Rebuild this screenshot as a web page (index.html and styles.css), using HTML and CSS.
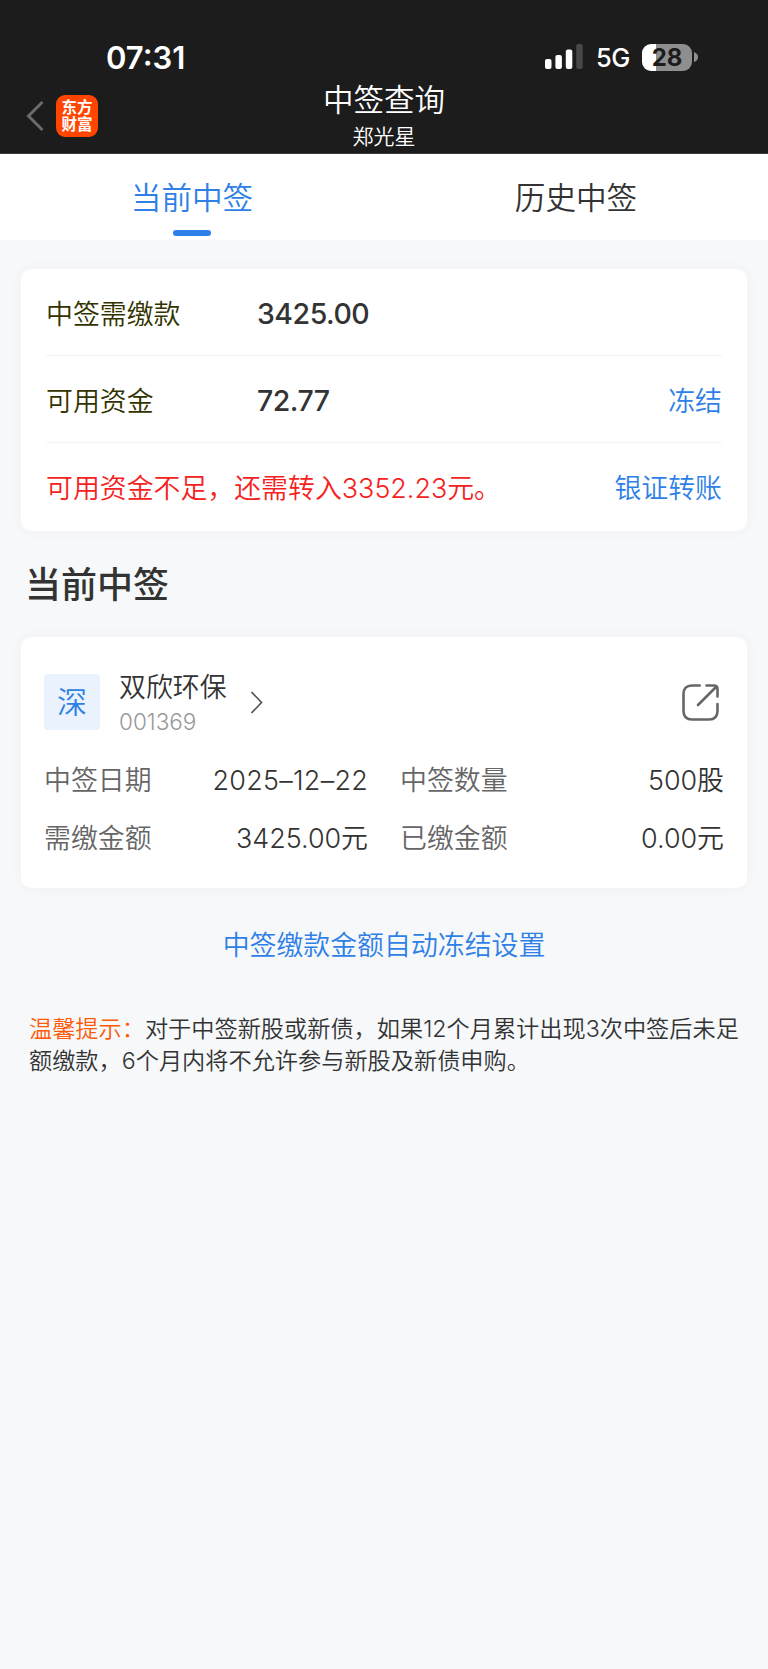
FILE: index.html
```html
<!DOCTYPE html>
<html lang="zh-CN">
<head>
<meta charset="utf-8">
<title>中签查询</title>
<link rel="stylesheet" href="styles.css">
</head>
<body>
<header class="top">
  <div class="status">
    <span class="clock">07:31</span>
    <span class="indicators">
      <svg class="signal" width="38" height="26" viewBox="0 0 38 26">
        <rect x="0" y="15" width="6.500" height="10" rx="2" fill="#fff"/>
        <rect x="10.400" y="11" width="6.500" height="14" rx="2" fill="#fff"/>
        <rect x="20.800" y="5.500" width="6.500" height="19.500" rx="2" fill="#fff"/>
        <rect x="31.200" y="0" width="6.500" height="25" rx="2" fill="#484848"/>
      </svg>
      <span class="network">5G</span>
      <span class="battery"><span class="battery-level">28</span><svg width="5" height="10" viewBox="0 0 5 10"><path d="M1 0Q5 1.500 5 5T1 10Z" fill="#8e8e8e"/></svg></span>
    </span>
  </div>
  <div class="nav">
    <div class="nav-left">
      <svg width="18" height="32" viewBox="0 0 18 32"><path d="M16.500 2L2.500 16L16.500 30" fill="none" stroke="#6b6b6b" stroke-width="3"/></svg>
      <div class="logo"><span>东方</span><span>财富</span></div>
    </div>
    <div class="nav-title">
      <h1>中签查询</h1>
      <p>郑光星</p>
    </div>
  </div>
</header>
<nav class="tabs">
  <a class="tab tab-active">当前中签</a>
  <a class="tab">历史中签</a>
</nav>
<main>
  <section class="card funds">
    <div class="fund-row"><span class="fund-label">中签需缴款</span><b class="amount">3425.00</b></div>
    <div class="fund-row"><span class="fund-label">可用资金</span><b class="amount">72.77</b><a class="link">冻结</a></div>
    <div class="fund-row"><span class="warning">可用资金不足，还需转入3352.23元。</span><a class="link">银证转账</a></div>
  </section>
  <h2>当前中签</h2>
  <section class="card stock">
    <div class="stock-head">
      <span class="market">深</span>
      <div class="stock-name"><strong>双欣环保</strong><span>001369</span></div>
      <svg class="chevron" width="13" height="23" viewBox="0 0 13 23"><path d="M1.500 1L11.500 11.500L1.500 22" fill="none" stroke="#555" stroke-width="1.700"/></svg>
      <svg class="share" width="37" height="37" viewBox="0 0 37 37"><path d="M17.700 1.500H10Q1.500 1.500 1.500 10V27Q1.500 35.500 10 35.500H27Q35.500 35.500 35.500 27V20M24.500 1.500H32Q35.500 1.500 35.500 5V12.500M34 3L16 21" fill="none" stroke="#666" stroke-width="2.600" stroke-linecap="round"/></svg>
    </div>
    <dl class="details">
      <div><dt>中签日期</dt><dd class="date">2025–12–22</dd></div>
      <div><dt>中签数量</dt><dd>500股</dd></div>
      <div><dt>需缴金额</dt><dd>3425.00元</dd></div>
      <div><dt>已缴金额</dt><dd>0.00元</dd></div>
    </dl>
  </section>
  <a class="setting">中签缴款金额自动冻结设置</a>
  <p class="tip"><em>温馨提示：</em>对于中签新股或新债，如果12个月累计出现3次中签后未足<br>额缴款，6个月内将不允许参与新股及新债申购。</p>
</main>
</body>
</html>
```
FILE: styles.css
```css
* { box-sizing: border-box; margin: 0; padding: 0; }
body {
  min-height: 1669px;
  background: #f6f8fa;
  color: #333;
  font-family: Inter, "Noto Sans CJK SC", sans-serif;
  font-size: 26.9px;
  font-weight: 350;
}
.top {
  height: 154px;
  background: #1c1c1c;
  border-bottom: 1px solid #3a3a3a;
  color: #fff;
}
.status {
  display: flex;
  justify-content: space-between;
  height: 82px;
  padding: 38px 70px 0 106px;
}
.clock { font-size: 31px; font-weight: 600; line-height: 39px; }
.indicators { display: flex; align-items: center; height: 38px; }
.network { width: 34px; margin: 0 12px 0 13px; font-size: 25.500px; font-weight: 450; letter-spacing: -0.500px; }
.battery { display: flex; align-items: center; gap: 1px; }
.battery-level {
  width: 50px;
  height: 27px;
  border-radius: 9px;
  background: linear-gradient(90deg, #fff 14.500px, #8e8e8e 14.500px);
  color: #1c1c1c;
  font-size: 24px;
  font-weight: 700;
  line-height: 27px;
  text-align: center;
}
.nav { display: grid; grid-template-columns: 1fr auto 1fr; }
.nav-left { display: flex; align-items: center; gap: 12px; height: 67px; padding-left: 26px; }
.logo {
  display: flex;
  flex-direction: column;
  justify-content: center;
  width: 42px;
  height: 42px;
  border-radius: 9px;
  background: #ff4500;
  font-size: 15.500px;
  font-weight: 700;
  line-height: 17px;
  text-align: center;
}
.nav-title { text-align: center; }
.nav-title h1 { font-size: 30.500px; font-weight: 350; line-height: 36px; }
.nav-title p { font-size: 21px; line-height: 38px; }
.tabs { display: flex; height: 86px; background: #fff; }
.tab {
  display: flex;
  flex: 1;
  flex-direction: column;
  align-items: center;
  padding-top: 22px;
  font-size: 30.600px;
  line-height: 44px;
}
.tab-active { color: #2e7fe6; }
.tab-active::after { content: ""; width: 38px; height: 6px; margin-top: 10px; border-radius: 3px; background: #2e7fe6; }
main { padding: 29px 21px 0; }
.card { border-radius: 10px; background: #fff; box-shadow: 0 0 14px rgba(30, 50, 80, 0.04); }
.funds { height: 262px; padding: 0 25px; }
.fund-row { display: flex; align-items: center; height: 87px; border-bottom: 1px solid #f3f4f6; }
.fund-row:last-child { border: 0; }
.fund-label { width: 211px; color: #333300; }
.amount { padding-top: 2px; font-size: 28.500px; font-weight: 500; letter-spacing: -0.500px; }
.link { margin-left: auto; color: #2e7fe6; }
.warning { color: #f52222; }
h2 { padding: 32px 0 30px 4px; font-size: 36px; font-weight: 500; line-height: 44px; }
.stock { height: 251px; padding: 37px 23px 0 23px; }
.stock-head { display: flex; height: 56px; }
.market {
  width: 56px;
  height: 56px;
  border-radius: 4px;
  background: #e9f2fd;
  color: #2e7fe6;
  font-size: 30px;
  line-height: 56px;
  text-align: center;
}
.stock-name { display: flex; flex-direction: column; margin: -5px 0 0 19px; }
.stock-name strong { font-weight: 350; line-height: 36px; }
.stock-name span { color: #999; font-size: 22.500px; line-height: 34px; }
.chevron { margin: 17px 0 0 23px; }
.share { margin: 10px 5px 0 auto; }
.details { display: grid; grid-template-columns: 324px 324px; column-gap: 32px; margin-top: 21px; }
.details div { display: flex; justify-content: space-between; line-height: 58px; }
.details dt { color: #666; }
.date { letter-spacing: 0.300px; }
.setting { display: block; margin-top: 37px; color: #2e7fe6; line-height: 40px; text-align: center; }
.tip { margin-top: 49px; padding-left: 8px; font-size: 23.200px; line-height: 31.500px; white-space: nowrap; }
.tip em { color: #ff5a0a; font-style: normal; }
```
